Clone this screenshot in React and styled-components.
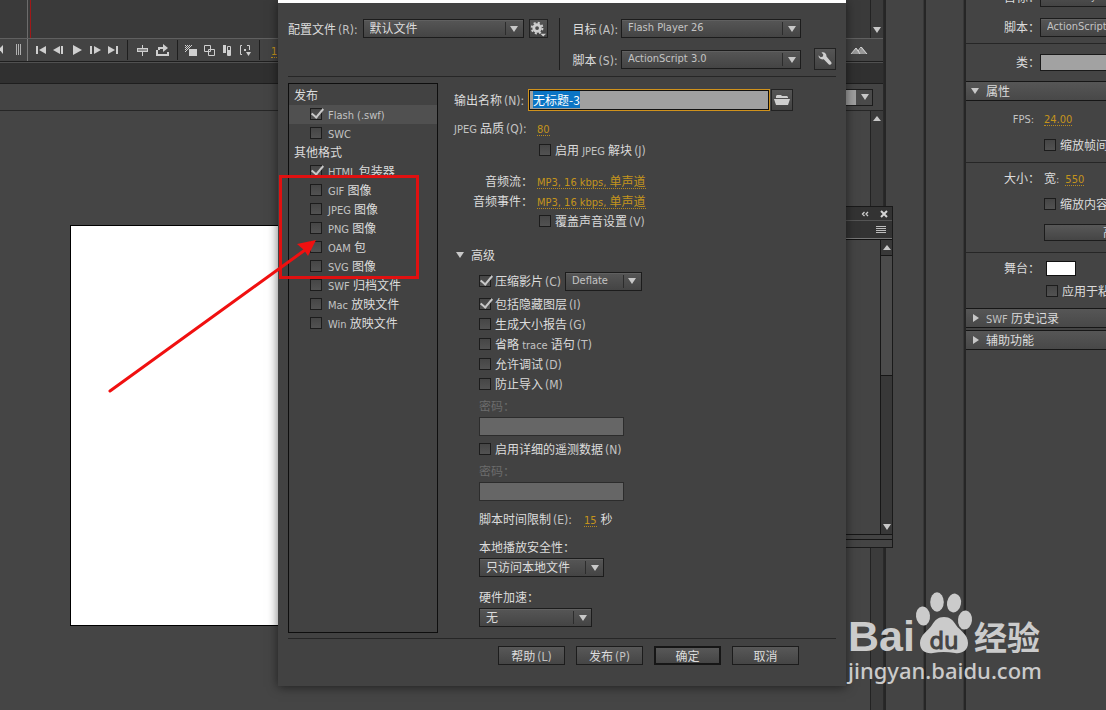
import React, { useEffect, useRef } from "react"
import styled, { createGlobalStyle } from "styled-components"

const LATIN = `"DejaVu Sans Condensed", "Noto Sans CJK SC", sans-serif`
const HAN = `"Noto Sans CJK SC", sans-serif`

const GlobalStyle = createGlobalStyle`
  * {
    box-sizing: border-box;
  }
  body {
    margin: 0;
    overflow: hidden;
    background: #444;
    color: #dcdcdc;
    font-family: ${HAN};
    font-size: 12px;
    line-height: 20px;
  }
  button, input, select {
    margin: 0;
    font: inherit;
    color: inherit;
    border-radius: 0;
  }
`

const Screen = styled.div`
  position: relative;
  display: flex;
  min-height: 100vh;
  overflow: hidden;
`

/* ---------- text ---------- */

const Latin = styled.span`
  margin-left: ${p => (p.$hint ? 2 : 0)}px;
  font-family: ${LATIN};
  font-size: ${p => (p.$hint ? 12 : 11)}px;
  line-height: 1;
  color: ${p => p.$color || "#c2c2c2"};
  white-space: pre;
`

// Latin runs are set one size smaller than the Chinese around them,
// except for the shortcut hints such as (R)
const Mixed = ({ text, color }) =>
  text
    .split(/([\x20-\x7e]+)/)
    .filter(Boolean)
    .map((part, i) =>
      /^[\x20-\x7e]/.test(part) ? (
        <Latin key={i} $color={color} $hint={part[0] === "("}>
          {part}
        </Latin>
      ) : (
        part
      )
    )

/* ---------- controls ---------- */

const SelectBox = styled.div`
  position: relative;
  flex: none;
  width: ${p => p.$width}px;
  height: 19px;
  border: 1px solid #1c1c1c;
  background: linear-gradient(#565656, #444);
  box-shadow: inset 0 1px 0 #606060;
`

const NativeSelect = styled.select`
  display: block;
  width: 100%;
  height: 16px;
  padding: 0 22px 0 6px;
  border: none;
  outline: none;
  background: transparent;
  appearance: none;
  font-family: ${p => (p.$latin ? LATIN : HAN)};
  font-size: ${p => (p.$latin ? 11 : 12)}px;
  line-height: 16px;
  color: ${p => (p.$latin ? "#c4c4c4" : "#dcdcdc")};
`

const SelectArrow = styled.span`
  position: absolute;
  top: 2px;
  right: 0;
  bottom: 2px;
  display: flex;
  align-items: center;
  justify-content: center;
  width: 18px;
  border-left: 1px solid #2c2c2c;
  pointer-events: none;
`

const Triangle = styled.span`
  width: 0;
  height: 0;
  border: 4px solid transparent;
  ${p =>
    ({
      down: "border-top: 6px solid #c8c8c8; border-bottom: none;",
      up: "border-bottom: 5px solid #c8c8c8; border-top: none;",
      right: "border-left: 6px solid #c8c8c8; border-right: none;"
    })[p.$dir]}
`

const Select = ({ id, label, value, width, latin }) => (
  <SelectBox $width={width}>
    <NativeSelect id={id} aria-label={label} $latin={latin} defaultValue={value}>
      <option value={value}>{value}</option>
    </NativeSelect>
    <SelectArrow>
      <Triangle $dir="down" />
    </SelectArrow>
  </SelectBox>
)

const CheckLabel = styled.label`
  display: flex;
  align-items: center;
  gap: ${p => p.$gap || 4}px;
  white-space: nowrap;
`

const Box = styled.input`
  position: relative;
  flex: none;
  width: 12px;
  height: 12px;
  border: 1px solid #1c1c1c;
  background: linear-gradient(#464646, #525252);
  appearance: none;
  outline: none;
  &:checked::after {
    content: "";
    position: absolute;
    top: -3px;
    left: 3px;
    width: 5px;
    height: 10px;
    border: solid #c8c8c8;
    border-width: 0 2px 2px 0;
    transform: rotate(40deg);
  }
`

const Check = ({ text, checked, gap }) => (
  <CheckLabel $gap={gap}>
    <Box type="checkbox" defaultChecked={checked} />
    <span>
      <Mixed text={text} />
    </span>
  </CheckLabel>
)

const HotText = styled.button`
  display: block;
  padding: 0;
  border: none;
  border-bottom: 1px dotted #b98a1c;
  background: none;
  color: #c4941c;
  line-height: 14px;
  white-space: nowrap;
`

const Hot = ({ text, label }) => (
  <HotText type="button" aria-label={label}>
    <Mixed text={text} color="#c4941c" />
  </HotText>
)

const IconButton = styled.button`
  display: flex;
  flex: none;
  align-items: center;
  justify-content: center;
  width: ${p => p.$size || 22}px;
  height: ${p => p.$size || 22}px;
  padding: 0;
  border: 1px solid #222;
  background: linear-gradient(#555, #434343);
`

const PushButton = styled.button`
  min-width: 67px;
  height: 19px;
  padding: 0 12px;
  border: ${p => (p.$primary ? "2px solid #161616" : "1px solid #1c1c1c")};
  background: linear-gradient(#585858, #454545);
  line-height: 14px;
  white-space: nowrap;
`

/* ---------- workspace behind the dialog ---------- */

const Workspace = styled.main`
  display: flex;
  flex: 1;
  flex-direction: column;
  min-width: 0;
  border-right: 1px solid #2a2a2a;
`

const Timeline = styled.div`
  display: flex;
  height: 38px;
  background: #3a3a3a;
`

const Playhead = styled.div`
  width: 4px;
  margin-left: 27px;
  border-left: 1px solid #6c6c6c;
  border-right: 1px solid #a01818;
`

const ScrollTrack = styled.div`
  display: flex;
  flex: none;
  flex-direction: column;
  justify-content: ${p => (p.$end ? "flex-end" : "flex-start")};
  align-items: center;
  width: 13px;
  margin-left: auto;
  padding: 5px 0;
  border-left: 1px solid #222;
  background: #3b3b3b;
`

const ToolBar = styled.div`
  display: flex;
  align-items: center;
  height: 24px;
  border-top: 1px solid #606060;
  border-bottom: 1px solid #1e1e1e;
  background: #434343;
`

const ToolGroup = styled.div`
  display: flex;
`

const Tool = styled.button`
  display: flex;
  align-items: center;
  justify-content: center;
  width: ${p => p.$width}px;
  height: 20px;
  padding: 0;
  border: none;
  background: none;
`

const Separator = styled.span`
  width: 1px;
  height: 20px;
  margin: 0 4px 0 5px;
  background: #1e1e1e;
`

const LayerEdge = styled.div`
  display: flex;
  align-items: center;
  width: 28px;
  height: 22px;
  margin-right: 4px;
  border-right: 1px solid #7c7c7c;
`

const FrameNumber = styled.span`
  padding-left: 7px;
`

const MountainWrap = styled.span`
  display: flex;
  margin-left: auto;
  padding-right: 15px;
`

const TabStrip = styled.div`
  height: 22px;
  border-top: 1px solid #505050;
  border-bottom: 1px solid #1e1e1e;
  background: #303030;
`

const EditBar = styled.div`
  display: flex;
  align-items: center;
  justify-content: flex-end;
  height: 27px;
  padding-right: 10px;
  border-bottom: 1px solid #262626;
`

const ZoomSelect = styled.div`
  display: flex;
  align-items: center;
  width: 70px;
  height: 17px;
  padding-left: 57px;
  border: 1px solid #1c1c1c;
  background: linear-gradient(90deg, #a0a0a0 52px, #4a4a4a 52px);
`

const CanvasRow = styled.div`
  display: flex;
  flex: 1;
`

const Pasteboard = styled.div`
  flex: 1;
  min-width: 0;
  overflow: hidden;
  padding: 114px 0 0 70px;
  background: #454545;
`

const Stage = styled.div`
  width: 552px;
  height: 401px;
  border: 1px solid #000;
  background: #fff;
`

const DockStrip = styled.div`
  flex: none;
  width: 40px;
  border-left: 2px solid #262626;
  border-right: 1px solid #383838;
  background: #444;
`

/* ---------- properties panel ---------- */

const Properties = styled.aside`
  flex: none;
  width: 142px;
  overflow: hidden;
  border-left: 2px solid #262626;
`

const PropertiesScroll = styled.div`
  width: 270px;
  margin-top: -13px;
`

const PropRow = styled.div`
  display: grid;
  grid-template-columns: 74px auto;
  align-items: center;
  justify-content: start;
  column-gap: ${p => p.$gap || 0}px;
  height: 20px;
  margin-top: ${p => p.$top || 0}px;
`

const RightLabel = styled.label`
  padding-right: ${p => p.$right || 0}px;
  text-align: right;
  white-space: nowrap;
`

const Inline = styled.div`
  display: flex;
  align-items: center;
  gap: 6px;
`

const ClassInput = styled.input`
  width: 180px;
  height: 17px;
  border: 1px solid #1a1a1a;
  background: #a2a2a2;
`

const Swatch = styled.button`
  width: 30px;
  height: 15px;
  padding: 0;
  border: 1px solid #111;
  background: #fff;
`

const WideButton = styled(PushButton)`
  width: 176px;
  height: 17px;
`

const Rule = styled.hr`
  height: 1px;
  margin: ${p => p.$margin || "0"};
  border: none;
  background: #262626;
`

const SectionHead = styled.button`
  display: flex;
  align-items: center;
  gap: 7px;
  width: 100%;
  height: 20px;
  margin: ${p => p.$top}px 0 0;
  padding: 0 0 0 ${p => (p.$open ? 5 : 7)}px;
  border: solid #161616;
  border-width: 1px 0;
  background: linear-gradient(#565656, #484848);
  line-height: 16px;
`

/* ---------- floating panel ---------- */

const FloatingPanel = styled.section`
  position: absolute;
  top: 206px;
  left: 700px;
  display: flex;
  flex-direction: column;
  width: 193px;
  height: 342px;
  border: 1px solid #1a1a1a;
  background: #444;
`

const PanelBar = styled.div`
  display: flex;
  align-items: center;
  justify-content: flex-end;
  gap: 11px;
  height: ${p => p.$height}px;
  padding-right: ${p => p.$right}px;
  border-bottom: 1px solid ${p => p.$line};
  background: #333;
`

const PanelBody = styled.div`
  display: flex;
  flex: 1;
  border-top: 1px solid #111;
`

const PanelScroll = styled.div`
  display: flex;
  flex-direction: column;
  align-items: center;
  width: 12px;
  margin-left: auto;
  padding: 5px 0 4px;
  border-left: 1px solid #161616;
  background: #383838;
`

const Thumb = styled.div`
  width: 100%;
  height: 121px;
  margin: 5px 0 auto;
  border: solid #161616;
  border-width: 1px 0;
  background: #4b4b4b;
`

const PanelFoot = styled.div`
  height: ${p => p.$height}px;
  border-top: 1px solid #161616;
`

/* ---------- dialog ---------- */

const Dialog = styled.form`
  position: absolute;
  top: 0;
  left: 278px;
  width: 568px;
  padding: 15px 10px 21px;
  border-top: 3px solid #fff;
  background: #424242;
  box-shadow: 0 1px 10px rgba(0, 0, 0, 0.55);
`

const Header = styled.div`
  display: flex;
  height: 58px;
`

const HeaderLeft = styled.div`
  display: flex;
  align-items: center;
  gap: 5px;
  height: 21px;
  padding-right: 11px;
`

const HeaderRight = styled.div`
  display: flex;
  flex: 1;
  align-items: flex-end;
  justify-content: space-between;
  height: 52px;
  padding-left: 13px;
  border-left: 1px solid #1e1e1e;
`

const Targets = styled.div`
  display: grid;
  grid-template-columns: auto auto;
  align-items: center;
  align-self: flex-start;
  gap: 10px 3px;
  line-height: 21px;
`

const Body = styled.div`
  display: flex;
  min-height: 561px;
  padding: 6px 0 5px;
`

const FormatList = styled.div`
  flex: none;
  width: 150px;
  padding-top: 2px;
  border: 1px solid #0e0e0e;
`

const FormatRow = styled.div`
  height: 19px;
  padding-left: ${p => (p.$group ? 5 : 21)}px;
  background: ${p => (p.$active ? "#505050" : "none")};
  line-height: 18px;
`

const Settings = styled.div`
  flex: 1;
  min-width: 0;
  padding: 6px 0 0 16px;
`

const FieldRow = styled.div`
  display: grid;
  grid-template-columns: 79px auto;
  align-items: center;
  justify-content: start;
  column-gap: 4px;
  height: 20px;
  margin-top: ${p => p.$top || 0}px;
  white-space: nowrap;
`

const NameRow = styled.div`
  display: grid;
  grid-template-columns: 73px 240px 22px;
  align-items: center;
  column-gap: 2px;
  white-space: nowrap;
`

const NameInput = styled.input`
  width: 100%;
  height: 20px;
  padding: 0 3px 2px;
  border: 1px solid #111;
  background: #a0a0a0;
  outline: 1px solid #d0921c;
  color: #fff;
  line-height: 16px;
  &::selection {
    background: #0b74c4;
    color: #fff;
  }
`

const Offset = styled.div`
  padding-left: 85px;
  margin-top: ${p => p.$top || 0}px;
`

const Disclosure = styled.button`
  display: flex;
  align-items: center;
  gap: 7px;
  height: 20px;
  margin: 14px 0 6px 2px;
  padding: 0;
  border: none;
  background: none;
`

const Advanced = styled.div`
  display: flex;
  flex-direction: column;
  align-items: flex-start;
  padding-left: 25px;
`

const Line = styled.div`
  display: flex;
  align-items: center;
  gap: 4px;
  height: 20px;
  margin-top: ${p => p.$top || 0}px;
`

const LimitLabel = styled.span`
  padding-right: 8px;
`

const FieldLabel = styled.label`
  height: 20px;
  margin: ${p => p.$top}px 0 1px;
  color: ${p => (p.$disabled ? "#6c6c6c" : "inherit")};
`

const PasswordInput = styled.input`
  width: 145px;
  height: 19px;
  border: 1px solid #2c2c2c;
  background: #666;
`

const Footer = styled.div`
  display: flex;
  justify-content: flex-end;
  gap: 11px;
  height: 26px;
  padding: 7px 37px 0 0;
`

/* ---------- overlays ---------- */

const RedFrame = styled.div`
  position: absolute;
  top: 175px;
  left: 279px;
  width: 140px;
  height: 104px;
  border: 3px solid #e01010;
`

const RedArrow = styled.svg`
  position: absolute;
  top: 230px;
  left: 100px;
`

const Watermark = styled.div`
  position: absolute;
  top: 590px;
  left: 848px;
  color: #cbcbcb;
`

const LogoLine = styled.div`
  display: flex;
  align-items: flex-end;
  height: 66px;
`

const Bai = styled.span`
  width: 66px;
  font: bold 43px/40px "Liberation Sans", sans-serif;
`

const Jingyan = styled.span`
  font: bold 33px/40px ${HAN};
`

const Site = styled.div`
  font: 500 22px/28px "Noto Sans", sans-serif;
`

/* ---------- icons ---------- */

const toolIcons = {
  first: (
    <>
      <path d="M4 3h2v8H4z" />
      <path d="M14 3v8L7 7z" />
    </>
  ),
  prev: (
    <>
      <path d="M10 3v8L3 7z" />
      <path d="M11 3h2v8h-2z" />
    </>
  ),
  play: <path d="M5 2l9 5-9 5z" />,
  next: (
    <>
      <path d="M4 3h2v8H4z" />
      <path d="M8 3l7 4-7 4z" />
    </>
  ),
  last: (
    <>
      <path d="M4 3l7 4-7 4z" />
      <path d="M12 3h2v8h-2z" />
    </>
  ),
  center: (
    <>
      <path d="M9 2h1v11H9z" />
      <path d="M4 5h11v1H4zM4 8h11v1H4zM4 6h1v2H4zM14 6h1v2h-1z" />
      <path d="M5 6h9v2H5z" fill="#8a8a8a" />
    </>
  ),
  loop: (
    <>
      <path d="M3 7h2v4h9v-2h2v4H3z" />
      <path d="M5 4h5V1l5 4-5 4V6H7v1H5z" />
    </>
  ),
  onion: (
    <>
      <path d="M7 6h8v7H7z" />
      <path d="M3 2h1v1H3zM5 2h1v1H5zM7 2h1v1H7zM9 2h1v1H9zM4 3h1v1H4zM6 3h1v1H6zM8 3h1v1H8zM3 4h1v1H3zM5 4h1v1H5zM7 4h1v1H7zM4 5h1v1H4zM6 5h1v1H6zM3 6h1v1H3zM5 6h1v1H5zM4 7h1v1H4zM3 8h1v1H3z" />
    </>
  ),
  outlines: (
    <path
      d="M4.500 2.500h6v6h-6z M8.500 6.500h6v6h-6z"
      fill="none"
      stroke="#cfcfcf"
    />
  ),
  frames: (
    <>
      <path d="M5 2h3v8H5z" />
      <path d="M9.500 3.500h3v9h-3z" fill="none" stroke="#cfcfcf" />
      <path d="M10 7h3v5h-3z" />
    </>
  ),
  markers: (
    <>
      <path d="M6 2.500H4.500v9H6 M11 2.500h2.500V7" fill="none" stroke="#cfcfcf" />
      <path d="M8 6h2v2H8zM10 9h5l-2.500 4z" />
    </>
  )
}

const ToolIcon = ({ name }) => (
  <svg width="18" height="14" viewBox="0 0 18 14" fill="#cfcfcf" aria-hidden="true">
    {toolIcons[name]}
  </svg>
)

const LayerEdgeIcon = () => (
  <svg width="24" height="12" viewBox="0 0 24 12" aria-hidden="true">
    <path d="M-1 5l4-4v9z" fill="#cfcfcf" />
    <path d="M16.500 0v11M18.500 0v11M20.500 0v11" stroke="#b0b0b0" />
  </svg>
)

const GearIcon = () => (
  <svg width="18" height="18" viewBox="0 0 18 18" fill="none" stroke="#cfcfcf" aria-hidden="true">
    <circle cx="7.500" cy="8" r="3.500" strokeWidth="3" />
    <circle cx="7.500" cy="8" r="5.700" strokeWidth="2" strokeDasharray="2.200 2.280" />
    <path d="M11 14h6l-3 3z" fill="#cfcfcf" stroke="none" />
  </svg>
)

const WrenchIcon = () => (
  <svg width="16" height="16" viewBox="0 0 16 16" aria-hidden="true">
    <path
      d="M4.500 1.500c2.500-1 5.200.8 5 4l4.800 5.800c1 1.500-.9 3.300-2.400 2.200L6.700 8.300C3.900 9 1.400 7.200 1.500 4.300l2.200 1.900 2.200-.6.400-2.200z"
      fill="#cfcfcf"
    />
  </svg>
)

const FolderIcon = () => (
  <svg width="18" height="14" viewBox="0 0 18 14" fill="#cfcfcf" aria-hidden="true">
    <path d="M3 5V3l1-1h4l1 1h5l1 1v1z" />
    <path d="M1 6h16l-2 6H3z" />
  </svg>
)

const MountainIcon = () => (
  <svg width="18" height="9" viewBox="0 0 18 9" aria-hidden="true">
    <path d="M1 8l5-6 3 3 3-4 5 7z" fill="#999" />
    <path d="M1 8l5-6 4 6M8 5l3-4 6 7" fill="none" stroke="#d8d8d8" />
  </svg>
)

const CollapseIcon = () => (
  <svg width="8" height="6" viewBox="0 0 8 6" aria-hidden="true">
    <path d="M3.500 1l-2 2 2 2M7 1L5 3l2 2" fill="none" stroke="#cfcfcf" strokeWidth="1.300" />
  </svg>
)

const CloseIcon = () => (
  <svg width="8" height="8" viewBox="0 0 8 8" aria-hidden="true">
    <path d="M1 1l6 6M7 1L1 7" stroke="#d4d4d4" strokeWidth="2" />
  </svg>
)

const MenuIcon = () => (
  <svg width="10" height="8" viewBox="0 0 10 8" aria-hidden="true">
    <path d="M0 .5h10M0 2.500h10M0 4.500h10M0 6.500h10" stroke="#bdbdbd" />
  </svg>
)

const PawLogo = () => (
  <svg width="60" height="64" viewBox="0 0 60 64" fill="#cbcbcb" aria-hidden="true">
    <ellipse cx="9" cy="24" rx="7" ry="9.500" transform="rotate(-6 9 24)" />
    <ellipse cx="23" cy="10" rx="6.800" ry="9.700" />
    <ellipse cx="40" cy="11" rx="7" ry="9.500" transform="rotate(10 40 11)" />
    <ellipse cx="51" cy="28" rx="7" ry="9.500" transform="rotate(6 51 28)" />
    <path d="M30 25c6 0 9 3 12 8 4 6 12 9 12 18 0 8-7 11-13 10-8-1.500-15-1.500-22 0C12 62 6 59 6 51c0-8 8-12 12-18 3-5 6-8 12-8z" />
    <text
      x="30"
      y="57"
      textAnchor="middle"
      fill="#444"
      stroke="#444"
      strokeWidth="1"
      fontFamily="DejaVu Sans, sans-serif"
      fontSize="23"
    >
      du
    </text>
  </svg>
)

/* ---------- sections ---------- */

const formats = [
  { text: "发布", group: true },
  { text: "Flash (.swf)", checked: true, active: true },
  { text: "SWC" },
  { text: "其他格式", group: true },
  { text: "HTML 包装器", checked: true },
  { text: "GIF 图像" },
  { text: "JPEG 图像" },
  { text: "PNG 图像" },
  { text: "OAM 包" },
  { text: "SVG 图像" },
  { text: "SWF 归档文件" },
  { text: "Mac 放映文件" },
  { text: "Win 放映文件" }
]

const toolGroups = [
  { width: 18, names: ["first", "prev", "play", "next", "last"] },
  { width: 20, names: ["center", "loop"] },
  { width: 18, names: ["onion", "outlines", "frames", "markers"] }
]

const WorkspaceArea = () => (
  <Workspace>
    <Timeline>
      <Playhead />
      <ScrollTrack $end>
        <Triangle $dir="down" />
      </ScrollTrack>
    </Timeline>
    <ToolBar>
      <LayerEdge>
        <LayerEdgeIcon />
      </LayerEdge>
      {toolGroups.map(group => (
        <React.Fragment key={group.names[0]}>
          <ToolGroup>
            {group.names.map(name => (
              <Tool key={name} type="button" aria-label={name} $width={group.width}>
                <ToolIcon name={name} />
              </Tool>
            ))}
          </ToolGroup>
          <Separator />
        </React.Fragment>
      ))}
      <FrameNumber>
        <Hot text="1" label="frame" />
      </FrameNumber>
      <MountainWrap>
        <MountainIcon />
      </MountainWrap>
    </ToolBar>
    <TabStrip />
    <EditBar>
      <ZoomSelect>
        <Triangle $dir="down" />
      </ZoomSelect>
    </EditBar>
    <CanvasRow>
      <Pasteboard>
        <Stage />
      </Pasteboard>
      <ScrollTrack>
        <Triangle $dir="up" />
      </ScrollTrack>
    </CanvasRow>
  </Workspace>
)

const PropertiesPanel = () => (
  <Properties>
    <PropertiesScroll>
      <PropRow>
        <RightLabel htmlFor="p-target">目标：</RightLabel>
        <Select id="p-target" value="Flash Player 26" width={180} latin />
      </PropRow>
      <PropRow $top={10}>
        <RightLabel htmlFor="p-script">脚本：</RightLabel>
        <Select id="p-script" value="ActionScript 3.0" width={180} latin />
      </PropRow>
      <Rule $margin="6px 0 8px" />
      <PropRow>
        <RightLabel htmlFor="p-class">类：</RightLabel>
        <ClassInput id="p-class" />
      </PropRow>
      <SectionHead type="button" $open $top={9}>
        <Triangle $dir="down" />
        属性
      </SectionHead>
      <PropRow $top={7} $gap={4}>
        <RightLabel as="span" $right={6}>
          <Mixed text="FPS:" />
        </RightLabel>
        <Hot text="24.00" label="FPS" />
      </PropRow>
      <PropRow $top={7} $gap={4}>
        <span />
        <Check text="缩放帧间距" />
      </PropRow>
      <Rule $margin="7px 0 5px" />
      <PropRow $gap={4}>
        <RightLabel as="span">大小：</RightLabel>
        <Inline>
          <span>
            <Mixed text="宽:" />
          </span>
          <Hot text="550" label="宽" />
        </Inline>
      </PropRow>
      <PropRow $top={6} $gap={4}>
        <span />
        <Check text="缩放内容" />
      </PropRow>
      <PropRow $top={8} $gap={4}>
        <span />
        <WideButton type="button">高级设置...</WideButton>
      </PropRow>
      <Rule $margin="10px 0 5px" />
      <PropRow $gap={6}>
        <RightLabel htmlFor="p-stage">舞台：</RightLabel>
        <Swatch type="button" id="p-stage" />
      </PropRow>
      <PropRow $top={3} $gap={6}>
        <span />
        <Check text="应用于粘贴板" />
      </PropRow>
      <SectionHead type="button" $top={7}>
        <Triangle $dir="right" />
        <span>
          <Mixed text="SWF 历史记录" />
        </span>
      </SectionHead>
      <SectionHead type="button" $top={2}>
        <Triangle $dir="right" />
        辅助功能
      </SectionHead>
    </PropertiesScroll>
  </Properties>
)

const PublishDialog = () => {
  const nameRef = useRef(null)

  useEffect(() => {
    nameRef.current.focus()
    nameRef.current.select()
  }, [])

  return (
    <Dialog>
      <Header>
        <HeaderLeft>
          <label htmlFor="profile">
            <Mixed text="配置文件(R):" />
          </label>
          <Select id="profile" value="默认文件" width={161} />
          <IconButton type="button" aria-label="配置文件选项" $size={19}>
            <GearIcon />
          </IconButton>
        </HeaderLeft>
        <HeaderRight>
          <Targets>
            <label htmlFor="target">
              <Mixed text="目标(A):" />
            </label>
            <Select id="target" value="Flash Player 26" width={180} latin />
            <label htmlFor="script">
              <Mixed text="脚本(S):" />
            </label>
            <Select id="script" value="ActionScript 3.0" width={180} latin />
          </Targets>
          <IconButton type="button" aria-label="ActionScript 设置">
            <WrenchIcon />
          </IconButton>
        </HeaderRight>
      </Header>
      <Rule />
      <Body>
        <FormatList>
          {formats.map(f => (
            <FormatRow key={f.text} $group={f.group} $active={f.active}>
              {f.group ? f.text : <Check text={f.text} checked={f.checked} gap={6} />}
            </FormatRow>
          ))}
        </FormatList>
        <Settings>
          <NameRow>
            <label htmlFor="output">
              <Mixed text="输出名称(N):" />
            </label>
            <NameInput id="output" ref={nameRef} defaultValue="无标题-3" />
            <IconButton type="button" aria-label="浏览">
              <FolderIcon />
            </IconButton>
          </NameRow>
          <FieldRow $top={7}>
            <span>
              <Mixed text="JPEG 品质(Q):" />
            </span>
            <Hot text="80" label="JPEG 品质" />
          </FieldRow>
          <Offset $top={2}>
            <Check text="启用 JPEG 解块(J)" />
          </Offset>
          <FieldRow $top={11}>
            <RightLabel as="span">音频流：</RightLabel>
            <Hot text="MP3, 16 kbps, 单声道" label="音频流" />
          </FieldRow>
          <FieldRow>
            <RightLabel as="span">音频事件：</RightLabel>
            <Hot text="MP3, 16 kbps, 单声道" label="音频事件" />
          </FieldRow>
          <Offset>
            <Check text="覆盖声音设置(V)" />
          </Offset>
          <Disclosure type="button">
            <Triangle $dir="down" />
            高级
          </Disclosure>
          <Advanced>
            <Line>
              <Check text="压缩影片(C)" checked />
              <Select label="压缩方式" value="Deflate" width={77} latin />
            </Line>
            <Line $top={3}>
              <Check text="包括隐藏图层(I)" checked />
            </Line>
            <Check text="生成大小报告(G)" />
            <Check text="省略 trace 语句(T)" />
            <Check text="允许调试(D)" />
            <Check text="防止导入(M)" />
            <FieldLabel htmlFor="pass1" $top={2} $disabled>
              密码：
            </FieldLabel>
            <PasswordInput id="pass1" type="password" disabled />
            <Line $top={3}>
              <Check text="启用详细的遥测数据(N)" />
            </Line>
            <FieldLabel htmlFor="pass2" $top={2} $disabled>
              密码：
            </FieldLabel>
            <PasswordInput id="pass2" type="password" disabled />
            <Line $top={8}>
              <LimitLabel>
                <Mixed text="脚本时间限制(E):" />
              </LimitLabel>
              <Hot text="15" label="脚本时间限制" />
              <span>秒</span>
            </Line>
            <FieldLabel htmlFor="security" $top={8}>
              本地播放安全性：
            </FieldLabel>
            <Select id="security" value="只访问本地文件" width={125} />
            <FieldLabel htmlFor="accel" $top={10}>
              硬件加速：
            </FieldLabel>
            <Select id="accel" value="无" width={113} />
          </Advanced>
        </Settings>
      </Body>
      <Rule />
      <Footer>
        <PushButton type="button">
          <Mixed text="帮助(L)" />
        </PushButton>
        <PushButton type="button">
          <Mixed text="发布(P)" />
        </PushButton>
        <PushButton type="button" $primary>
          确定
        </PushButton>
        <PushButton type="button">取消</PushButton>
      </Footer>
    </Dialog>
  )
}

const App = () => (
  <Screen>
    <GlobalStyle />
    <WorkspaceArea />
    <DockStrip />
    <DockStrip />
    <PropertiesPanel />
    <FloatingPanel>
      <PanelBar $height={14} $right={4} $line="#555">
        <CollapseIcon />
        <CloseIcon />
      </PanelBar>
      <PanelBar $height={18} $right={6} $line="#777">
        <MenuIcon />
      </PanelBar>
      <PanelBody>
        <PanelScroll>
          <Triangle $dir="up" />
          <Thumb />
          <Triangle $dir="down" />
        </PanelScroll>
      </PanelBody>
      <PanelFoot $height={5} />
      <PanelFoot $height={8} />
    </FloatingPanel>
    <PublishDialog />
    <RedFrame />
    <RedArrow width="220" height="170" viewBox="0 0 220 170" aria-hidden="true">
      <path d="M10 161L205 20" stroke="#f01010" strokeWidth="3" strokeLinecap="round" />
      <path d="M216 10l-8 16-4-6-7-6z" fill="#f01010" />
    </RedArrow>
    <Watermark>
      <LogoLine>
        <Bai>Bai</Bai>
        <PawLogo />
        <Jingyan>经验</Jingyan>
      </LogoLine>
      <Site>jingyan.baidu.com</Site>
    </Watermark>
  </Screen>
)

export default App
